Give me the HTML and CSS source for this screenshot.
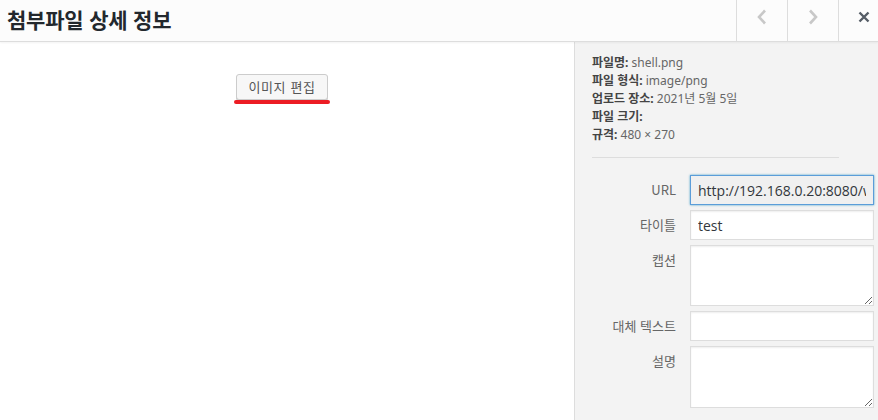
FILE: index.html
```html
<!DOCTYPE html>
<html lang="ko">
<head>
<meta charset="utf-8">
<link rel="stylesheet" href="styles.css">
</head>
<body>
<div class="modal">
  <header class="head">
    <h1 class="title">첨부파일 상세 정보</h1>
    <div class="nav">
      <button class="navbtn prev" aria-label="이전"><svg width="10" height="16" viewBox="0 0 10 16"><path d="M8 1.5 2 8l6 6.5" fill="none" stroke="#c8c8c8" stroke-width="2.6"/></svg></button>
      <button class="navbtn next" aria-label="다음"><svg width="10" height="16" viewBox="0 0 10 16"><path d="M2 1.5 8 8l-6 6.5" fill="none" stroke="#c8c8c8" stroke-width="2.6"/></svg></button>
      <button class="navbtn close" aria-label="닫기"><svg width="12" height="12" viewBox="0 0 12 12"><path d="M1.5 1.5l9 9M10.5 1.5l-9 9" fill="none" stroke="#555d66" stroke-width="2.4"/></svg></button>
    </div>
  </header>
  <div class="body">
    <main class="preview">
      <div class="editwrap">
        <button class="editbtn">이미지 편집</button>
        <span class="mark"></span>
      </div>
    </main>
    <aside class="side">
      <div class="info">
        <div><b>파일명:</b> shell.png</div>
        <div><b>파일 형식:</b> image/png</div>
        <div><b>업로드 장소:</b> 2021년 5월 5일</div>
        <div><b>파일 크기:</b></div>
        <div><b>규격:</b> 480 × 270</div>
      </div>
      <hr class="sep">
      <div class="settings">
        <label class="row"><span class="lbl">URL</span><input class="field url" value="http://192.168.0.20:8080/wp-content/uploads/2021/05/shell.png" readonly></label>
        <label class="row"><span class="lbl">타이틀</span><input class="field" value="test"></label>
        <label class="row"><span class="lbl">캡션</span><textarea class="field area"></textarea></label>
        <label class="row"><span class="lbl">대체 텍스트</span><input class="field"></label>
        <label class="row"><span class="lbl">설명</span><textarea class="field area"></textarea></label>
      </div>
    </aside>
  </div>
</div>
</body>
</html>
```
FILE: styles.css
```css
* { box-sizing: border-box; }
html, body { margin: 0; padding: 0; }
body {
  width: 878px;
  height: 420px;
  overflow: hidden;
  font-family: "Noto Sans", "Noto Sans CJK KR", sans-serif;
  background: #fff;
  color: #444;
}
.modal { display: flex; flex-direction: column; height: 420px; }
.head {
  height: 42px;
  flex: none;
  display: flex;
  justify-content: space-between;
  background: #fcfcfc;
  border-bottom: 1px solid #ddd;
  box-shadow: 0 1px 2px rgba(0,0,0,0.05);
  position: relative;
  z-index: 1;
}
.title {
  margin: 0;
  padding: 0 0 0 7px;
  font-family: "Noto Sans CJK KR", sans-serif;
  font-size: 21px;
  font-weight: 700;
  line-height: 38px;
  color: #23282d;
  letter-spacing: -0.2px;
}
.nav { display: flex; height: 41px; }
.navbtn {
  width: 51px;
  height: 41px;
  border: 0;
  border-left: 1px solid #ddd;
  background: transparent;
  padding: 0;
  display: flex;
  align-items: center;
  justify-content: center;
  padding-bottom: 8px;
}
.navbtn.close { width: 40px; padding-left: 10px; }
.body { flex: 1; display: flex; min-height: 0; }
.preview {
  width: 574px;
  flex: none;
  background: #fff;
  display: flex;
  justify-content: center;
  padding-top: 32px;
  padding-right: 10px;
}
.editwrap { display: flex; flex-direction: column; align-items: center; height: 30px; }
.editbtn {
  height: 26px;
  padding: 0 11px;
  font-family: "Noto Sans CJK KR", sans-serif;
  font-size: 13px;
  color: #555;
  background: #f7f7f7;
  border: 1px solid #ccc;
  border-radius: 3px;
  box-shadow: 0 1px 0 #ccc;
  line-height: 24px;
  letter-spacing: 0.6px;
}
.mark {
  display: block;
  width: 96px;
  height: 4px;
  margin-top: 0;
  background: #ec1c24;
  border-radius: 2px;
}
.side {
  flex: 1;
  background: #f3f3f3;
  border-left: 1px solid #ddd;
  padding: 12px 0 0 17px;
}
.info {
  font-size: 12px;
  line-height: 18px;
  color: #666;
}
.info b { font-weight: 700; color: #444; }
.sep {
  margin: 13px 0 0 0;
  width: 247px;
  border: 0;
  border-top: 1px solid #ddd;
  height: 0;
}
.settings {
  margin-top: 17px;
  display: flex;
  flex-direction: column;
  gap: 5px;
}
.row { display: flex; align-items: flex-start; }
.lbl {
  width: 85px;
  flex: none;
  text-align: right;
  font-family: "Noto Sans CJK KR", sans-serif;
  font-size: 13px;
  line-height: 18px;
  color: #666;
  padding-top: 6px;
  padding-right: 1px;
}
.field {
  margin-left: 13px;
  width: 184px;
  height: 30px;
  border: 1px solid #ddd;
  background: #fff;
  box-shadow: inset 0 1px 2px rgba(0,0,0,0.07);
  font-family: "Open Sans", "Noto Sans", sans-serif;
  font-size: 14px;
  color: #32373c;
  padding: 0 7px;
  outline: none;
}
.field.url {
  background: #f0f0f0;
  border-color: #5b9dd9;
  box-shadow: 0 0 2px rgba(30,140,190,0.8);
  overflow: hidden;
}
.field.area { height: 61px; resize: vertical; padding: 4px 7px; }
.row:last-child .field.area { height: 62px; }
```
